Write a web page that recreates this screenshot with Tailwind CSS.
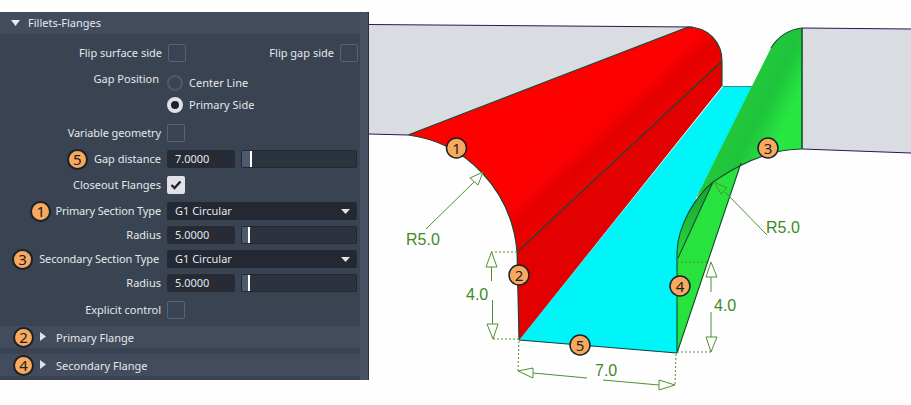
<!DOCTYPE html>
<html lang="en">
<head>
  <meta charset="UTF-8" />
  <title>Fillets-Flanges</title>
  <script src="https://cdn.jsdelivr.net/npm/@tailwindcss/browser@4"></script>
</head>
<body class="bg-[#fefefe]">
  <div class="flex w-[911px] h-[405px] overflow-hidden font-['Noto_Sans',sans-serif] text-[11px] text-[#e4e7ec]">

    <!-- panel -->
    <div class="mt-[12px] h-[368px] w-[369px] shrink-0 flex bg-[#3a4351] border-r border-[#2a303a]">
      <div class="w-[360px] flex flex-col">
        <div class="h-[22px] flex items-center bg-[#434c5c] pl-[11px]">
          <svg width="9" height="6" class="mr-[8px]"><path d="M0 0H9L4.500 6Z" fill="#e8eaee"/></svg>
          <span>Fillets-Flanges</span>
        </div>

        <div class="flex flex-col pt-[10px]">
          <div class="flex items-center h-[18px]">
            <span class="w-[162px] text-right">Flip surface side</span>
            <div class="ml-[6px] w-[18px] h-[18px] rounded-[2px] border border-[#56627a]"></div>
            <span class="w-[148px] text-right">Flip gap side</span>
            <div class="ml-[6px] w-[18px] h-[18px] rounded-[2px] border border-[#56627a]"></div>
          </div>

          <div class="flex mt-[10px] h-[44px]">
            <span class="w-[159px] text-right mt-[-1px]">Gap Position</span>
            <div class="ml-[8px] flex flex-col">
              <div class="flex items-center h-[22px]">
                <div class="w-[16px] h-[16px] rounded-full border-2 border-[#4e596c]"></div>
                <span class="ml-[6px]">Center Line</span>
              </div>
              <div class="flex items-center h-[22px]">
                <div class="w-[16px] h-[16px] rounded-full border-[4px] border-[#dfe2e6] bg-[#1d222b]"></div>
                <span class="ml-[6px]">Primary Side</span>
              </div>
            </div>
          </div>

          <div class="flex items-center h-[18px] mt-[8px]">
            <span class="w-[161px] text-right tracking-[-0.1px]">Variable geometry</span>
            <div class="ml-[6px] w-[18px] h-[18px] rounded-[2px] border border-[#56627a]"></div>
          </div>

          <div class="flex items-center h-[18px] mt-[8px]">
            <div class="w-[161px] flex items-center justify-end gap-[6px]">
              <div class="w-[21px] h-[21px] rounded-full bg-[#f9a95c] border-2 border-[#1b2029] flex items-center justify-center text-[15px] text-[#1b2029]">5</div>
              <span>Gap distance</span>
            </div>
            <div class="ml-[6px] w-[68px] h-[18px] rounded-[2px] bg-[#262b35] flex items-center pl-[8px]">7.0000</div>
            <div class="ml-[6px] w-[116px] h-[18px] rounded-[2px] bg-[#2c323e] border border-[#222730] flex">
              <div class="w-[8px] bg-[#4d5a70]"></div>
              <div class="w-[2px] bg-white"></div>
            </div>
          </div>

          <div class="flex items-center h-[18px] mt-[8px]">
            <span class="w-[161px] text-right">Closeout Flanges</span>
            <div class="ml-[6px] w-[18px] h-[18px] rounded-[2px] bg-[#e0e2e6] flex items-center justify-center">
              <svg width="12" height="10" viewBox="0 0 12 10"><path d="M1.500 5L4.500 8L10.500 1.500" fill="none" stroke="#1d222b" stroke-width="2.400"/></svg>
            </div>
          </div>

          <div class="flex items-center h-[18px] mt-[8px]">
            <div class="w-[161px] flex items-center justify-end gap-[4px]">
              <div class="w-[21px] h-[21px] rounded-full bg-[#f9a95c] border-2 border-[#1b2029] flex items-center justify-center text-[15px] text-[#1b2029]">1</div>
              <span class="tracking-[-0.15px]">Primary Section Type</span>
            </div>
            <div class="ml-[6px] w-[190px] h-[18px] rounded-[2px] bg-[#232833] flex items-center justify-between pl-[8px] pr-[7px]">
              <span>G1 Circular</span>
              <svg width="9" height="5"><path d="M0 0H9L4.500 5Z" fill="#dfe2e6"/></svg>
            </div>
          </div>

          <div class="flex items-center h-[18px] mt-[6px]">
            <span class="w-[161px] text-right">Radius</span>
            <div class="ml-[6px] w-[68px] h-[18px] rounded-[2px] bg-[#262b35] flex items-center pl-[8px]">5.0000</div>
            <div class="ml-[6px] w-[116px] h-[18px] rounded-[2px] bg-[#2c323e] border border-[#222730] flex">
              <div class="w-[6px] bg-[#4d5a70]"></div>
              <div class="w-[2px] bg-white"></div>
            </div>
          </div>

          <div class="flex items-center h-[18px] mt-[6px]">
            <div class="w-[159px] flex items-center justify-end gap-[6px]">
              <div class="w-[21px] h-[21px] rounded-full bg-[#f9a95c] border-2 border-[#1b2029] flex items-center justify-center text-[15px] text-[#1b2029]">3</div>
              <span class="tracking-[-0.1px]">Secondary Section Type</span>
            </div>
            <div class="ml-[8px] w-[190px] h-[18px] rounded-[2px] bg-[#232833] flex items-center justify-between pl-[8px] pr-[7px]">
              <span>G1 Circular</span>
              <svg width="9" height="5"><path d="M0 0H9L4.500 5Z" fill="#dfe2e6"/></svg>
            </div>
          </div>

          <div class="flex items-center h-[18px] mt-[6px]">
            <span class="w-[161px] text-right">Radius</span>
            <div class="ml-[6px] w-[68px] h-[18px] rounded-[2px] bg-[#262b35] flex items-center pl-[8px]">5.0000</div>
            <div class="ml-[6px] w-[116px] h-[18px] rounded-[2px] bg-[#2c323e] border border-[#222730] flex">
              <div class="w-[6px] bg-[#4d5a70]"></div>
              <div class="w-[2px] bg-white"></div>
            </div>
          </div>

          <div class="flex items-center h-[18px] mt-[9px]">
            <span class="w-[161px] text-right">Explicit control</span>
            <div class="ml-[6px] w-[18px] h-[18px] rounded-[2px] border border-[#56627a]"></div>
          </div>
        </div>

        <div class="mt-[7px] h-[22px] flex items-center bg-[#434c5c] pl-[13px]">
          <div class="w-[21px] h-[21px] rounded-full bg-[#f9a95c] border-2 border-[#1b2029] flex items-center justify-center text-[15px] text-[#1b2029]">2</div>
          <svg width="6" height="9" class="ml-[6px] mb-[2px]"><path d="M0 0V9L6 4.500Z" fill="#dfe2e6"/></svg>
          <span class="ml-[10px] pt-[2px]">Primary Flange</span>
        </div>
        <div class="mt-[6px] h-[22px] flex items-center bg-[#434c5c] pl-[13px]">
          <div class="w-[21px] h-[21px] rounded-full bg-[#f9a95c] border-2 border-[#1b2029] flex items-center justify-center text-[15px] text-[#1b2029]">4</div>
          <svg width="6" height="9" class="ml-[6px] mb-[2px]"><path d="M0 0V9L6 4.500Z" fill="#dfe2e6"/></svg>
          <span class="ml-[10px] pt-[2px]">Secondary Flange</span>
        </div>
      </div>
      <div class="w-[8px] bg-[#495263] rounded-t-[3px]"></div>
    </div>

    <!-- model view, viewBox keeps screenshot coordinates -->
    <svg class="w-[542px] h-[405px] shrink-0" viewBox="369 0 542 405">
      <defs>
        <linearGradient id="redTop" gradientUnits="userSpaceOnUse" x1="555" y1="105" x2="625" y2="180">
          <stop offset="0" stop-color="#ff0000"/>
          <stop offset="0.45" stop-color="#fb0000"/>
          <stop offset="0.62" stop-color="#e20000"/>
          <stop offset="0.8" stop-color="#f20000"/>
          <stop offset="1" stop-color="#df0000"/>
        </linearGradient>
        <linearGradient id="greenTop" gradientUnits="userSpaceOnUse" x1="730" y1="80" x2="800" y2="115">
          <stop offset="0" stop-color="#21cc3c"/>
          <stop offset="0.55" stop-color="#1fc43a"/>
          <stop offset="0.9" stop-color="#27e842"/>
          <stop offset="1" stop-color="#27e842"/>
        </linearGradient>
        <linearGradient id="greenFold" gradientUnits="userSpaceOnUse" x1="695" y1="195" x2="680" y2="265">
          <stop offset="0" stop-color="#1da834"/>
          <stop offset="1" stop-color="#27e03e"/>
        </linearGradient>
      </defs>

      <!-- grey flats -->
      <path d="M369 24.500L693 27L408 135L369 134Z" fill="#d9dde1"/>
      <path d="M802 28L911 29V153L802 149Z" fill="#d9dde1"/>
      <path d="M369 24.500L693 27M369 134L408 135" fill="none" stroke="#2c1458" stroke-width="1"/>
      <path d="M802 28L911 29M802 149L911 153" fill="none" stroke="#2c1458" stroke-width="1"/>

      <!-- cyan floor -->
      <path d="M519 340L723 86.500H753L696 198L690 260L677 262V353Z" fill="#00f5f8"/>
      <path d="M723 86.500H753" stroke="#0f5a50" stroke-width="0.700"/>
      <path d="M519 340L677 353" stroke="#123c3a" stroke-width="1.200"/>

      <!-- red fillet -->
      <path d="M408 135L688 27C708 27 722 42 722 61V86L519 340L517 252C512 190 465 142 408 135Z" fill="url(#redTop)"/>
      <path d="M517 252L722 61V86L519 340Z" fill="#e30000"/>
      <path d="M408 135L688 27C708 27 722 42 722 61V86M517 252L722 61M519 340L517 252C512 190 465 142 408 135" fill="none" stroke="#124a34" stroke-width="1.100"/>

      <!-- green fillet -->
      <path d="M677 353L741 163L713 182L678 258L677 262Z" fill="#28e33e"/>
      <path d="M713 182L678 258L677 252C678 225 695 197 713 182Z" fill="url(#greenFold)"/>
      <path d="M771 48C778 36 790 29 802 28V149C775 149 745 160 713 182L696 198Z" fill="url(#greenTop)"/>
      <path d="M802 28V149" stroke="#125030" stroke-width="1.600"/>
      <path d="M802 149C775 149 745 160 713 182C695 197 678 225 677 252V353L741 163M713 182L678 258M771 48C778 36 790 29 802 28" fill="none" stroke="#124a34" stroke-width="1.100"/>

      <!-- dimensions -->
      <g fill="none" stroke="#4f9030" stroke-width="1">
        <path d="M426 229L474 182M483 172L470 178L478 185Z"/>
        <path d="M491.500 267V281M492.500 300V324M491.500 252L486 267H497ZM493 339L487 324H498Z"/>
        <path d="M533 373L587 378M603 380L659 385M518 371L533 368V378ZM675 385L659 380V390Z"/>
        <path d="M711 277V292M711 312V337M711 262L706 277H717ZM711 352L706 337H717Z"/>
        <path d="M767 235L725 192M714 182L727 188L721 194Z"/>
        <g stroke-dasharray="2 2">
          <path d="M491 252H517M493 339H519M519 341L518 371M676 354L675 385M677 262H708M677 352H711"/>
        </g>
      </g>
      <g fill="#3f8a1f" font-family="Liberation Sans, sans-serif" font-size="16">
        <text x="406" y="245">R5.0</text>
        <text x="466" y="300">4.0</text>
        <text x="595" y="376">7.0</text>
        <text x="766" y="233">R5.0</text>
        <text x="714" y="311">4.0</text>
      </g>

      <!-- callouts -->
      <g fill="#f9a95c" stroke="#1b2029" stroke-width="1.500">
        <circle cx="456.500" cy="148" r="10"/>
        <circle cx="768" cy="148" r="10"/>
        <circle cx="519" cy="275" r="10"/>
        <circle cx="680" cy="286" r="10"/>
        <circle cx="580" cy="345" r="10"/>
      </g>
      <g fill="#1b2029" font-family="Noto Sans, sans-serif" font-size="15" text-anchor="middle">
        <text x="456.500" y="153.500">1</text>
        <text x="768" y="153.500">3</text>
        <text x="519" y="280.500">2</text>
        <text x="680" y="291.500">4</text>
        <text x="580" y="350.500">5</text>
      </g>
    </svg>
  </div>
</body>
</html>
